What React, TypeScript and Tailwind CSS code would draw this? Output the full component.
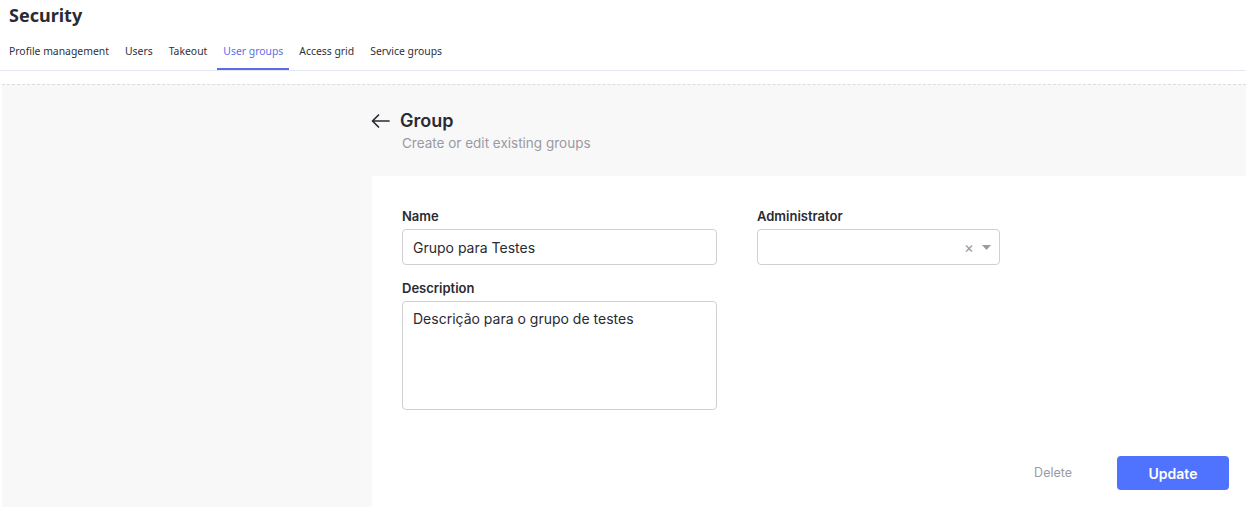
const tabs = ["Profile management", "Users", "Takeout", "User groups", "Access grid", "Service groups"];

export default function App() {
  const active = "User groups";

  return (
    <div className="min-h-screen bg-white font-['Inter',sans-serif] text-[#212529]">
      <header className="border-b border-[#e3e8ef]">
        <h1 className="px-[9px] pt-[4px] font-['Noto_Sans',sans-serif] text-[18px] font-bold leading-[22px] text-[#2a2a33]">
          Security
        </h1>
        <nav className="mt-[9px] flex gap-[4px] px-[3px] font-['Noto_Sans',sans-serif] text-[10.4px] text-[#2f2f3a]">
          {tabs.map((t) => (
            <button
              key={t}
              className={`h-[35px] border-b-2 px-[6px] ${
                t === active ? "border-[#5b6ee6] text-[#5b6ee6]" : "border-transparent"
              }`}
            >
              {t}
            </button>
          ))}
        </nav>
      </header>

      <div className="ml-[2px] mt-[13px] flex h-[423px] border-t border-dashed border-[#dcdcdc] bg-[#f8f8f8]">
        <div className="w-[370px] shrink-0" />
        <main className="flex-1">
          <div className="pt-[24px]">
            <div className="-ml-[1px] flex items-center gap-[10px]">
              <svg width="19" height="14" viewBox="0 0 19 14" fill="none" stroke="#2a2a33" strokeWidth="1.7" strokeLinecap="round" strokeLinejoin="round">
                <path d="M18 7H1.5M7.5 1L1.5 7l6 6" />
              </svg>
              <h2 className="text-[18px] font-semibold leading-[24px] text-[#2a2a33]">Group</h2>
            </div>
            <p className="ml-[30px] text-[13.5px] leading-[20px] text-[#9a9aa2]">Create or edit existing groups</p>
          </div>

          <section className="mt-[23px] h-full bg-white pl-[30px] pr-[17px] pt-[32px]">
            <div className="flex gap-[40px]">
              <div className="w-[315px]">
                <label className="block text-[13px] font-semibold leading-[17px] text-[#2a2a33]">Name</label>
                <input
                  defaultValue="Grupo para Testes"
                  className="mt-[4px] h-[36px] w-full rounded-[4px] border border-[#cfcfd4] px-[10px] text-[14px] text-[#2a2a33] outline-none"
                />
              </div>
              <div className="w-[243px]">
                <label className="block text-[13px] font-semibold leading-[17px] text-[#2a2a33]">Administrator</label>
                <div className="mt-[4px] flex h-[36px] items-center justify-end gap-[8px] rounded-[4px] border border-[#cfcfd4] px-[8px] text-[#9a9aa2]">
                  <span className="text-[15px] leading-none">×</span>
                  <svg width="9" height="5" viewBox="0 0 9 5" className="fill-[#9a9aa2]">
                    <path d="M0 0h9L4.5 5z" />
                  </svg>
                </div>
              </div>
            </div>

            <div className="mt-[15px] w-[315px]">
              <label className="block text-[13px] font-semibold leading-[17px] text-[#2a2a33]">Description</label>
              <textarea
                defaultValue="Descrição para o grupo de testes"
                className="mt-[4px] block h-[109px] w-full resize-none rounded-[4px] border border-[#cfcfd4] px-[10px] py-[6px] text-[14px] text-[#2a2a33] outline-none"
              />
            </div>

            <div className="mt-[46px] flex items-center justify-end gap-[45px]">
              <button className="text-[12.5px] text-[#9a9aa2]">Delete</button>
              <button className="h-[34px] w-[112px] rounded-[4px] bg-[#4f72ff] text-[14px] font-semibold text-white">
                Update
              </button>
            </div>
          </section>
        </main>
      </div>
    </div>
  );
}
